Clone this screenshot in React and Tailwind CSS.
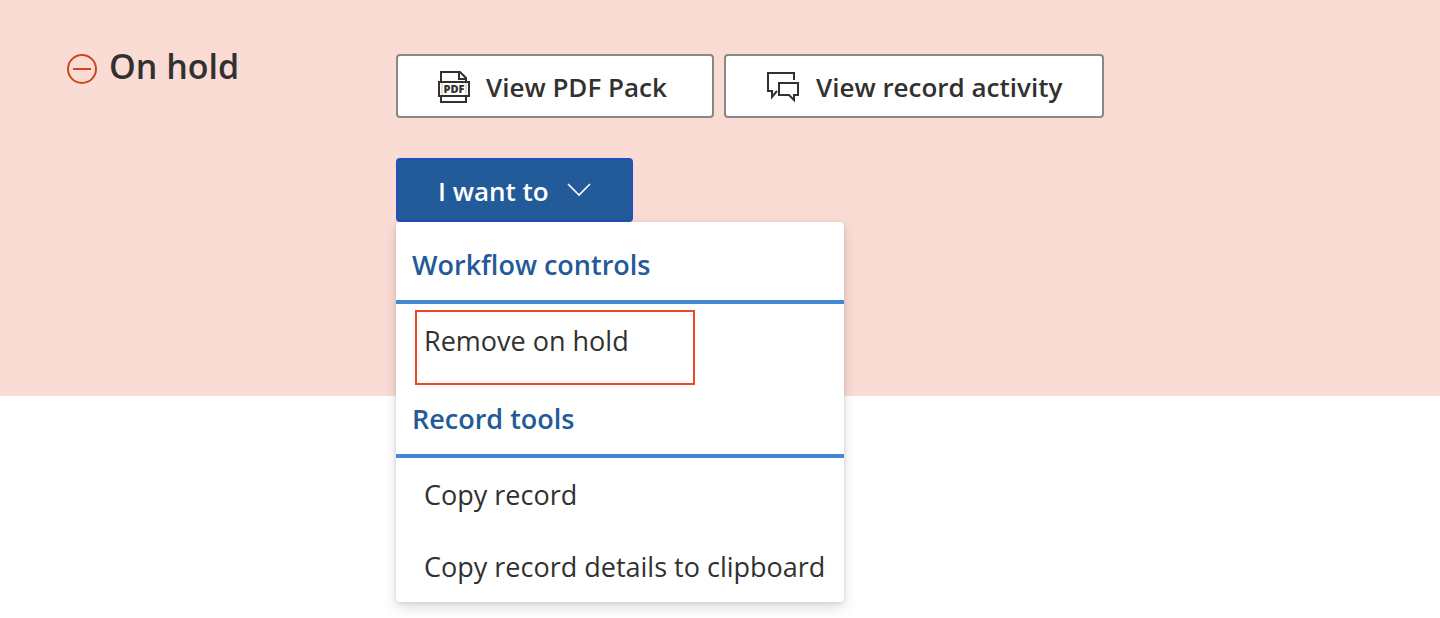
import { useState } from 'react'

const menuGroups = [
  {
    title: 'Workflow controls',
    items: [{ label: 'Remove on hold', highlighted: true }]
  },
  {
    title: 'Record tools',
    items: [
      { label: 'Copy record' },
      { label: 'Copy record details to clipboard' }
    ]
  }
]

const OnHoldIcon = () => (
  <svg width="30" height="30" viewBox="0 0 30 30" fill="none" stroke="#cf451f" strokeWidth="2" aria-hidden="true">
    <circle cx="15" cy="15" r="14" />
    <path d="M6 15h18" />
  </svg>
)

const PdfIcon = () => (
  <svg width="32" height="34" viewBox="0 0 32 34" fill="none" stroke="#323130" strokeWidth="2" aria-hidden="true">
    <path d="M3 12V3h19l6 6v3M21 3v7h7M3 27v6h25v-6" />
    <path d="M1 13h30v14H1z" />
    <path d="M4 14v12M28 14v12" strokeWidth="1" strokeOpacity="0.3" />
    <text
      x="16"
      y="24"
      textAnchor="middle"
      fill="#323130"
      stroke="none"
      fontFamily="'Open Sans', sans-serif"
      fontSize="11"
      fontWeight="800"
    >
      PDF
    </text>
  </svg>
)

const ActivityIcon = () => (
  <svg width="34" height="34" viewBox="0 0 34 34" fill="none" stroke="#323130" strokeWidth="2" aria-hidden="true">
    <path d="M28 11V4H2v18h4v6l5-6" />
    <path d="M13 14h19v12h-4v5l-5-5H13z" />
  </svg>
)

const ChevronIcon = () => (
  <svg width="24" height="14" viewBox="0 0 24 14" fill="none" stroke="currentColor" strokeWidth="1.6" aria-hidden="true">
    <path d="M1 1l11 11L23 1" />
  </svg>
)

const OutlineButton = ({ icon: Icon, children }) => (
  <button
    type="button"
    className="flex h-16 min-w-[318px] items-center gap-4 rounded border-2 border-[#8a8886] bg-white px-10 text-[26px] leading-9 font-semibold whitespace-nowrap text-[#323130]"
  >
    <Icon />
    <span className="pt-[2px]">{children}</span>
  </button>
)

export default function App() {
  const [open, setOpen] = useState(true)

  return (
    <main className="min-h-screen bg-white font-['Open_Sans','Noto_Sans',sans-serif] text-[#323130]">
      <section className="flex items-start bg-[#fadcd4] pt-[54px] pb-[174px]">
        <div className="flex w-[396px] shrink-0 items-start gap-3 pl-[67px]">
          <OnHoldIcon />
          <h1 className="text-[34px] leading-6 font-semibold whitespace-nowrap">On hold</h1>
        </div>

        <div className="flex min-w-0 flex-1 flex-col items-start gap-10">
          <div className="flex gap-[10px]">
            <OutlineButton icon={PdfIcon}>View PDF Pack</OutlineButton>
            <OutlineButton icon={ActivityIcon}>View record activity</OutlineButton>
          </div>

          <div className="relative">
            <button
              type="button"
              aria-haspopup="menu"
              aria-expanded={open}
              onClick={() => setOpen(!open)}
              className="flex h-16 items-center gap-[18px] rounded border-2 border-[#1f53bb] bg-[#235a99] px-10 text-[26px] leading-9 font-semibold whitespace-nowrap text-white"
            >
              <span className="pt-[2px]">I want to</span>
              <ChevronIcon />
            </button>

            {open && (
              <div
                role="menu"
                className="absolute top-full left-0 w-[448px] rounded bg-white shadow-[0_6px_14px_rgba(0,0,0,0.13),0_1px_4px_rgba(0,0,0,0.11)]"
              >
                {menuGroups.map((group) => (
                  <div key={group.title} role="group" aria-label={group.title}>
                    <h2 className="border-b-4 border-[#4488d3] px-4 pt-[25px] pb-[17px] text-[27px] leading-9 font-semibold text-[#235a99]">
                      {group.title}
                    </h2>
                    {group.items.map((item) => (
                      <button
                        key={item.label}
                        type="button"
                        role="menuitem"
                        className="relative flex h-[72px] w-full items-center pt-[2px] pl-7 text-left text-[27px] leading-9 whitespace-nowrap"
                      >
                        {item.label}
                        {item.highlighted && (
                          <span className="absolute top-[6px] left-[19px] h-[75px] w-[280px] border-2 border-[#ee452b]" />
                        )}
                      </button>
                    ))}
                  </div>
                ))}
              </div>
            )}
          </div>
        </div>
      </section>
    </main>
  )
}
